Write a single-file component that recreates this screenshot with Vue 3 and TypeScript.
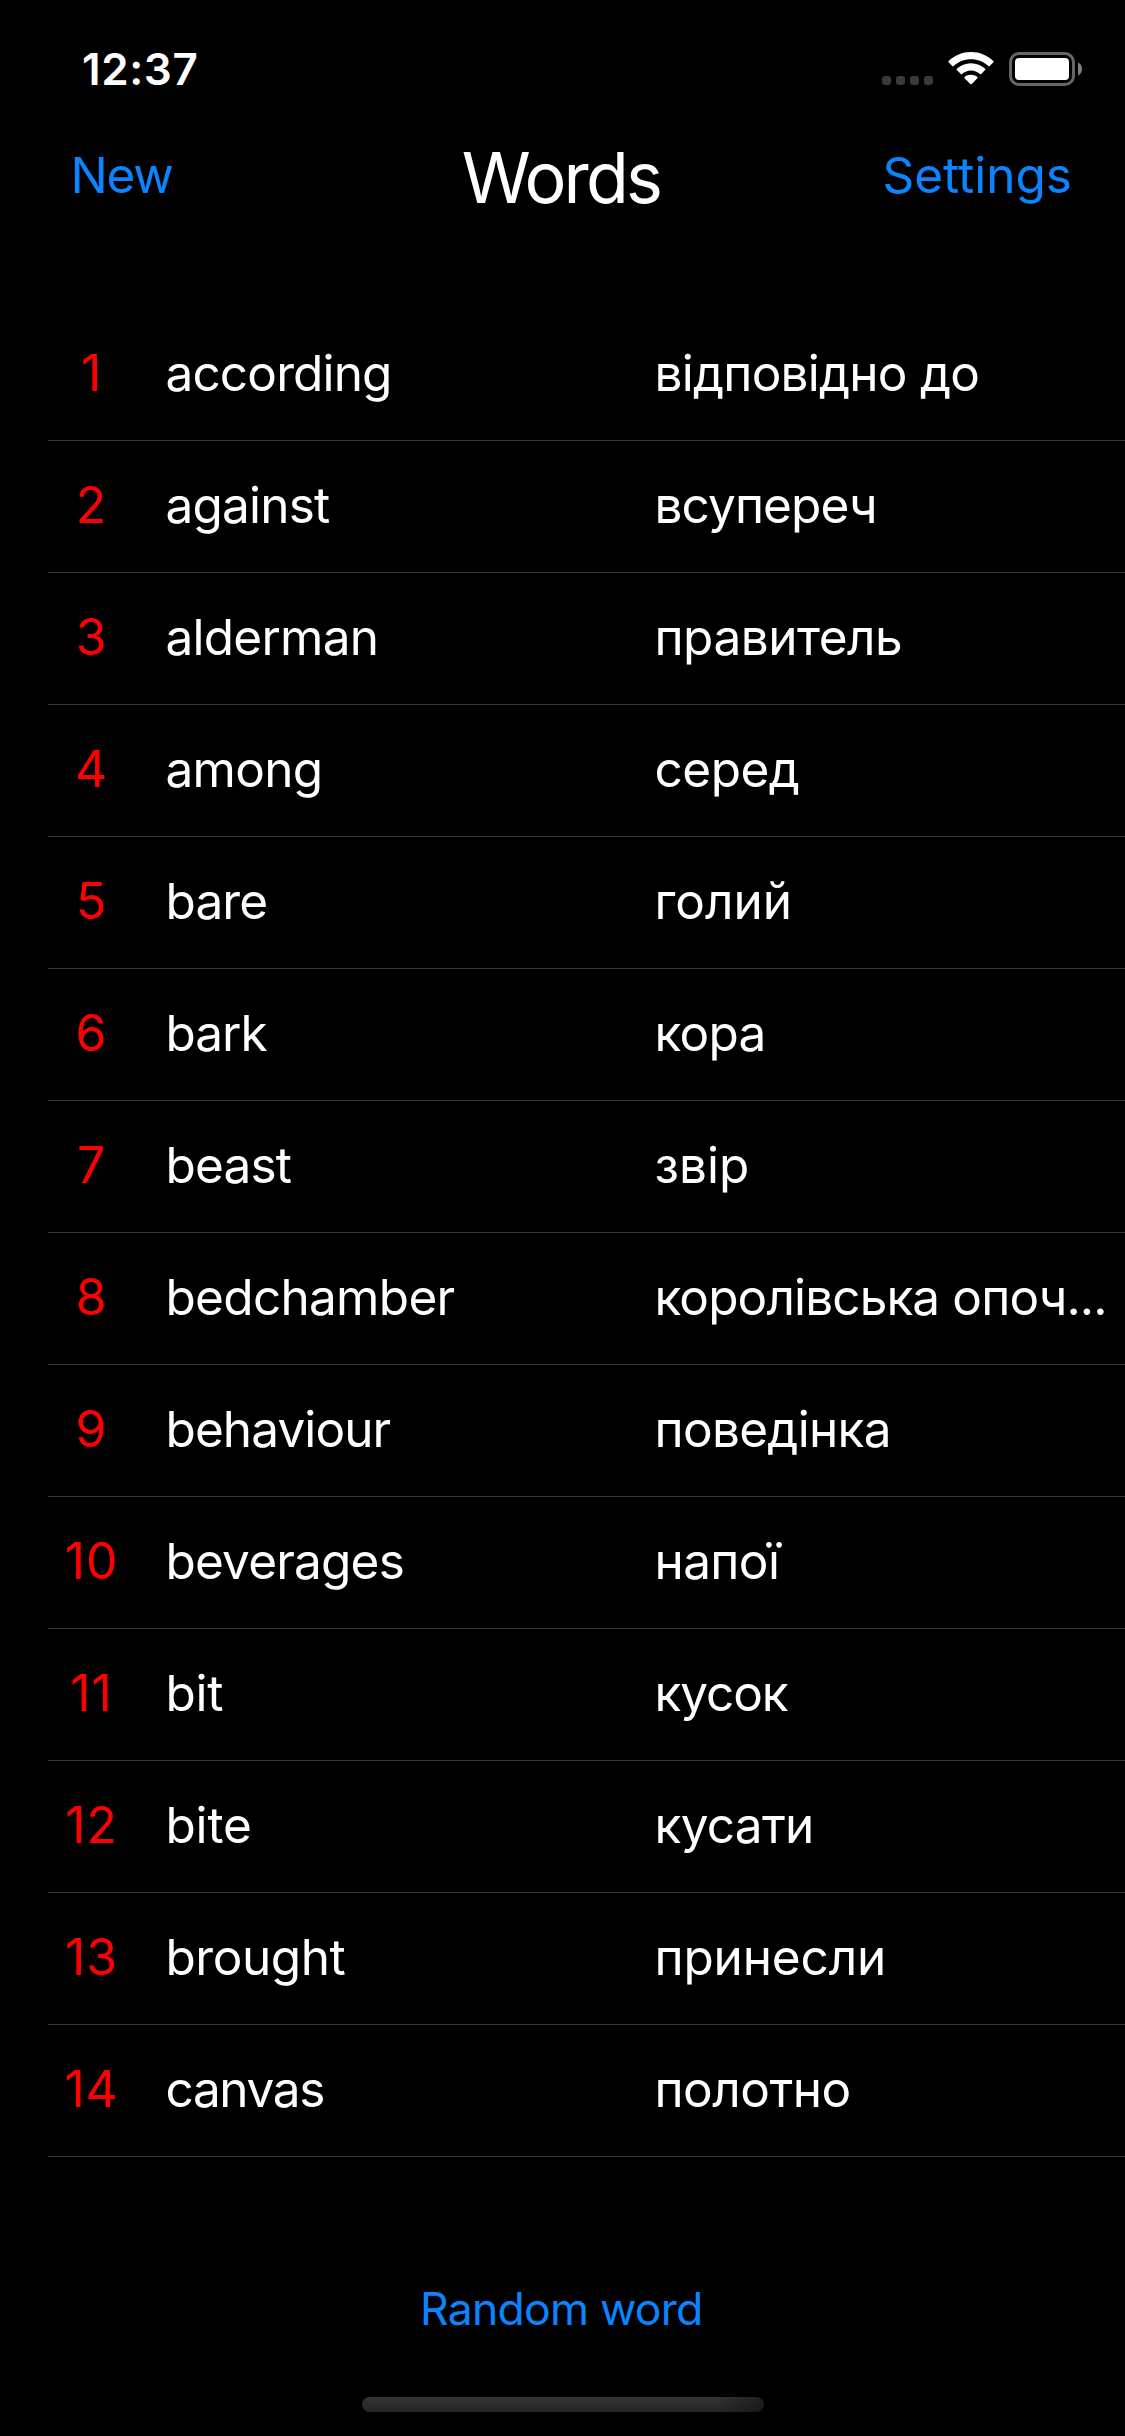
<script setup lang="ts">
interface Entry {
  word: string
  translation: string
  // letter spacing in px for the word and its translation
  tracking: [number, number]
}

const entries: Entry[] = [
  { word: 'according', translation: 'відповідно до', tracking: [-0.85, -0.75] },
  { word: 'against', translation: 'всупереч', tracking: [-0.8, -0.9] },
  { word: 'alderman', translation: 'правитель', tracking: [-0.75, -0.5] },
  { word: 'among', translation: 'серед', tracking: [-0.7, -0.5] },
  { word: 'bare', translation: 'голий', tracking: [-0.9, 0] },
  { word: 'bark', translation: 'кора', tracking: [-1, -0.75] },
  { word: 'beast', translation: 'звір', tracking: [-0.8, 0] },
  { word: 'bedchamber', translation: 'королівська опоч...', tracking: [-0.7, -0.87] },
  { word: 'behaviour', translation: 'поведінка', tracking: [-0.9, -0.7] },
  { word: 'beverages', translation: 'напої', tracking: [-0.8, -0.6] },
  { word: 'bit', translation: 'кусок', tracking: [-0.3, -1.1] },
  { word: 'bite', translation: 'кусати', tracking: [-0.2, -0.7] },
  { word: 'brought', translation: 'принесли', tracking: [-0.45, -0.15] },
  { word: 'canvas', translation: 'полотно', tracking: [-1.35, -0.5] },
]
</script>

<template>
  <div class="screen">
    <div class="status">
      <span class="time">12:37</span>
      <svg class="indicators" width="204" height="40" viewBox="0 0 204 40">
        <g fill="#3a3a3a">
          <rect x="2" y="26" width="9" height="9" rx="3" />
          <rect x="16" y="26" width="9" height="9" rx="3" />
          <rect x="30" y="26" width="9" height="9" rx="3" />
          <rect x="44" y="26" width="9" height="9" rx="3" />
        </g>
        <g fill="#fff">
          <path d="M91 2C82.300 2 74.500 5.400 68.600 10.900Q68 11.500 68.600 12.200L72.300 15.900Q72.900 16.500 73.600 15.900C78.200 11.700 84.300 9.200 91 9.200C97.700 9.200 103.800 11.700 108.400 15.900Q109.100 16.500 109.700 15.900L113.400 12.200Q114 11.500 113.400 10.900C107.500 5.400 99.700 2 91 2Z" />
          <path d="M91 13.200C85.500 13.200 80.600 15.300 76.900 18.700Q76.200 19.400 76.900 20.100L80.800 23.900Q81.400 24.500 82.100 23.900C84.500 21.800 87.600 20.500 91 20.500C94.400 20.500 97.500 21.800 99.900 23.900Q100.600 24.500 101.200 23.900L105.100 20.100Q105.800 19.400 105.100 18.700C101.400 15.300 96.500 13.200 91 13.200Z" />
          <path d="M91 24.800C88.500 24.800 86.300 25.600 84.600 27Q83.900 27.600 84.600 28.300L90.300 34Q91 34.700 91.700 34L97.400 28.300Q98.100 27.600 97.400 27C95.700 25.600 93.500 24.800 91 24.800Z" />
        </g>
        <rect x="130.500" y="3.500" width="63" height="31" rx="8.500" fill="none" stroke="#666" stroke-width="3" />
        <rect x="135" y="8" width="54" height="22" rx="4" fill="#fff" />
        <path d="M198 12.500C200.500 13.500 202 16 202 19S200.500 24.500 198 25.500Z" fill="#808080" />
      </svg>
    </div>
    <header class="nav">
      <a class="link new">New</a>
      <h1 class="title">Words</h1>
      <a class="link settings">Settings</a>
    </header>
    <ul class="list">
      <li v-for="(entry, i) in entries" :key="entry.word" class="row">
        <span class="num">{{ i + 1 }}</span>
        <span class="word" :style="{ letterSpacing: entry.tracking[0] + 'px' }">{{ entry.word }}</span>
        <span class="translation" :style="{ letterSpacing: entry.tracking[1] + 'px' }">{{ entry.translation }}</span>
      </li>
    </ul>
    <footer class="footer">
      <a class="random">Random word</a>
      <div class="home"></div>
    </footer>
  </div>
</template>

<style>
body {
  background: #000;
}
</style>

<style scoped>
.screen {
  width: 1125px;
  height: 2436px;
  overflow: hidden;
  background: #000;
  color: #fff;
  font-family: Inter, 'Liberation Sans', sans-serif;
  font-size: 49.5px;
  display: flex;
  flex-direction: column;
}
.status {
  height: 50px;
  padding: 50px 41px 0 82px;
  display: flex;
  justify-content: space-between;
}
.time {
  font-size: 44px;
  line-height: 38px;
  font-weight: 600;
  letter-spacing: 0.6px;
}
.nav {
  height: 209px;
  display: grid;
  grid-template-columns: 1fr auto 1fr;
  align-items: start;
}
.link {
  color: #0a84ff;
  line-height: 60px;
  margin-top: 45px;
}
.new {
  padding-left: 70.5px;
  letter-spacing: -1.3px;
}
.settings {
  justify-self: end;
  padding-right: 53px;
}
.title {
  margin: 38px 3px 0 0;
  font-size: 70px;
  line-height: 80px;
  font-weight: 400;
  letter-spacing: -2.8px;
}
.list {
  margin: 0;
  padding: 0 0 0 48px;
  list-style: none;
}
.row {
  height: 131px;
  border-bottom: 1px solid #373737;
  display: flex;
  line-height: 128px;
  white-space: nowrap;
}
.num {
  width: 87px;
  text-align: center;
  color: #f00;
  font-size: 50px;
  letter-spacing: 0.8px;
}
.word {
  width: 489px;
  margin-left: 30.5px;
}
.translation {
  width: 470px;
}
.footer {
  flex: 1;
  display: flex;
  flex-direction: column;
  align-items: center;
}
.random {
  margin: 122px 2.5px 0 0;
  color: #0a84ff;
  font-size: 44.5px;
  line-height: 60px;
  letter-spacing: -0.75px;
}
.home {
  margin-top: 58px;
  width: 402px;
  height: 15px;
  border-radius: 8px;
  background: linear-gradient(90deg, transparent 88%, rgba(0, 0, 0, 0.4)), linear-gradient(#343434, #262626);
}
</style>
